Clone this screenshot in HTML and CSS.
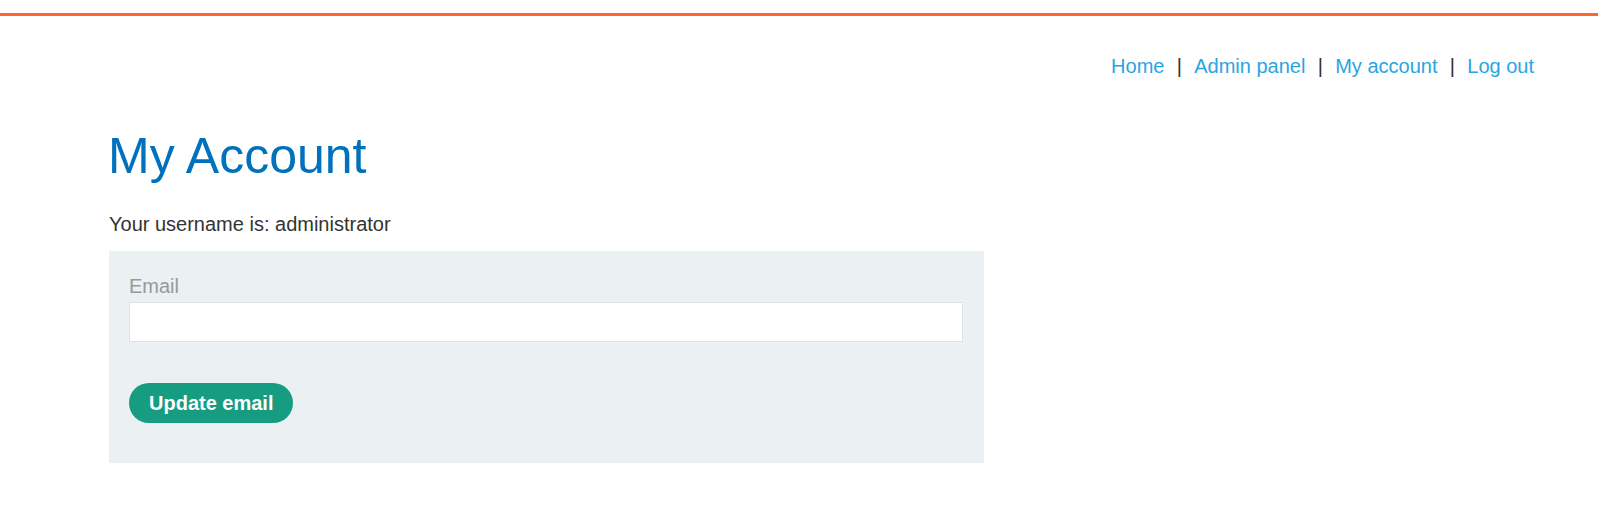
FILE: index.html
```html
<!DOCTYPE html>
<html>
<head>
<meta charset="utf-8">
<title>My Account</title>
<link rel="stylesheet" href="styles.css">
</head>
<body>
<div class="topbar"></div>
<nav class="top-links">
  <a href="#">Home</a><span class="sep">|</span>
  <a href="#">Admin panel</a><span class="sep">|</span>
  <a href="#">My account</a><span class="sep">|</span>
  <a href="#">Log out</a>
</nav>
<main class="container">
  <h1 class="title">My Account</h1>
  <p class="username">Your username is: administrator</p>
  <form class="email-form">
    <label class="label" for="email">Email</label>
    <input class="input" id="email" type="email">
    <button class="button" type="button">Update email</button>
  </form>
</main>
</body>
</html>
```

FILE: styles.css
```css
html, body {
  margin: 0;
  padding: 0;
  background: #ffffff;
  font-family: "Liberation Sans", Arial, sans-serif;
  color: #333332;
}

.topbar {
  margin-top: 13px;
  height: 3px;
  background: #ff6633;
}

.top-links {
  display: flex;
  justify-content: flex-end;
  align-items: baseline;
  margin-top: 39px;
  padding-right: 64px;
  font-size: 20px;
  line-height: 23px;
}

.top-links a {
  color: #2aa5e2;
  text-decoration: none;
}

.sep {
  color: #333332;
  margin: 0 12.3px;
}

.container {
  padding-left: 109px;
}

.title {
  margin: 50px 0 0 -1px;
  font-size: 50px;
  font-weight: normal;
  line-height: 56px;
  color: #0071bc;
}

.username {
  margin: 29px 0 0 0;
  font-size: 20px;
  line-height: 23px;
}

.email-form {
  margin-top: 15px;
  width: 875px;
  box-sizing: border-box;
  padding: 24px 21px 40px 20px;
  background: #ebf0f2;
  display: flex;
  flex-direction: column;
  align-items: flex-start;
}

.label {
  display: block;
  font-size: 20px;
  line-height: 23px;
  color: #999999;
  margin-bottom: 4px;
}

.input {
  display: block;
  width: 100%;
  height: 40px;
  box-sizing: border-box;
  margin: 0;
  border: 1px solid #e0e3e5;
  background: #ffffff;
  font-size: 18px;
  padding: 0 10px;
}

.button {
  margin-top: 41px;
  height: 40px;
  padding: 0 20px;
  border: none;
  border-radius: 20px;
  background: #169c80;
  color: #ffffff;
  font-family: "Liberation Sans", Arial, sans-serif;
  font-size: 20px;
  font-weight: bold;
  line-height: 40px;
}
```
